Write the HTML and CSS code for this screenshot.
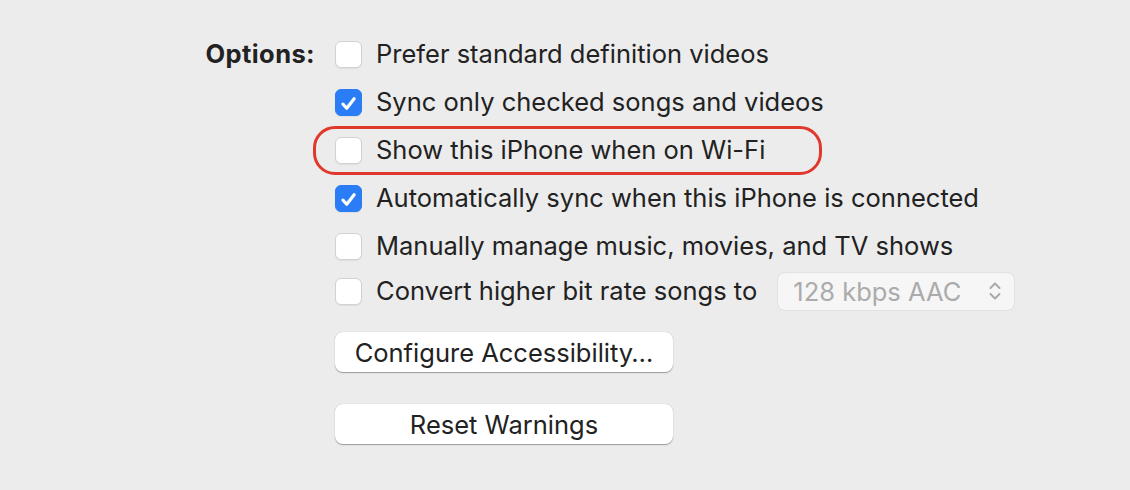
FILE: index.html
```html
<!DOCTYPE html>
<html>
<head>
<meta charset="utf-8">
<link rel="stylesheet" href="styles.css">
</head>
<body>
<div class="panel">
  <div class="label">Options:</div>
  <div class="options">
    <div class="row"><span class="cb"></span><span class="txt">Prefer standard definition videos</span></div>
    <div class="row"><span class="cb on"><svg viewBox="0 0 27 27" width="27" height="27"><path d="M7.5 14.2 L11.6 18.6 L19.6 8.4" fill="none" stroke="#fff" stroke-width="3.4" stroke-linecap="round" stroke-linejoin="round"/></svg></span><span class="txt">Sync only checked songs and videos</span></div>
    <div class="row hl"><span class="cb"></span><span class="txt">Show this iPhone when on Wi-Fi</span><span class="ring"></span></div>
    <div class="row"><span class="cb on"><svg viewBox="0 0 27 27" width="27" height="27"><path d="M7.5 14.2 L11.6 18.6 L19.6 8.4" fill="none" stroke="#fff" stroke-width="3.4" stroke-linecap="round" stroke-linejoin="round"/></svg></span><span class="txt">Automatically sync when this iPhone is connected</span></div>
    <div class="row"><span class="cb"></span><span class="txt">Manually manage music, movies, and TV shows</span></div>
    <div class="row last"><span class="cb"></span><span class="txt">Convert higher bit rate songs to</span>
      <div class="select"><span>128 kbps AAC</span><svg viewBox="0 0 14 22" width="14" height="22"><path d="M2.5 8 L7 3.5 L11.5 8 M2.5 14 L7 18.5 L11.5 14" fill="none" stroke="#a9a9a9" stroke-width="2" stroke-linecap="round" stroke-linejoin="round"/></svg></div>
    </div>
    <div class="btn b1">Configure Accessibility…</div>
    <div class="btn b2">Reset Warnings</div>
  </div>
</div>
</body>
</html>
```
FILE: styles.css
```css
html, body {
  margin: 0;
  padding: 0;
  background: #ececec;
  width: 1130px;
  height: 490px;
  overflow: hidden;
}
body {
  font-family: Inter, "Liberation Sans", sans-serif;
  color: #222222;
  font-size: 25.5px;
}
.panel {
  display: grid;
  grid-template-columns: 315px auto;
  column-gap: 20px;
  padding-top: 30px;
}
.label {
  text-align: right;
  font-weight: 700;
  letter-spacing: 0.4px;
  height: 48px;
  line-height: 47px;
}
.options {
  display: flex;
  flex-direction: column;
}
.row {
  display: flex;
  align-items: center;
  height: 48px;
  position: relative;
}
.row.last {
  height: 42px;
}
.cb {
  width: 27px;
  height: 27px;
  box-sizing: border-box;
  border-radius: 6px;
  background: #fff;
  border: 1px solid #d2d2d2;
  box-shadow: 0 1px 1px rgba(0,0,0,0.06);
  flex: none;
  display: flex;
}
.cb.on {
  background: #2a7df5;
  border-color: #2a7df5;
}
.txt {
  margin-left: 14px;
  white-space: nowrap;
  position: relative;
  top: -1px;
}
.ring {
  position: absolute;
  left: -22px;
  top: 0;
  width: 509px;
  height: 49px;
  box-sizing: border-box;
  border: 3px solid #e0382c;
  border-radius: 22px;
}
.select {
  margin-left: 20px;
  width: 238px;
  height: 39px;
  box-sizing: border-box;
  background: #f6f6f6;
  border-radius: 8px;
  border: 1px solid #e2e2e2;
  display: flex;
  align-items: center;
  justify-content: space-between;
  padding: 0 12px 0 15px;
  color: #ababab;
}
.btn {
  width: 338px;
  height: 40px;
  box-sizing: border-box;
  background: #fff;
  border-radius: 8px;
  box-shadow: 0 0.5px 1px rgba(0,0,0,0.25), 0 1px 1.5px rgba(0,0,0,0.12);
  display: flex;
  align-items: center;
  justify-content: center;
}
.b1 { margin-top: 20px; }
.b2 { margin-top: 32px; }
```
